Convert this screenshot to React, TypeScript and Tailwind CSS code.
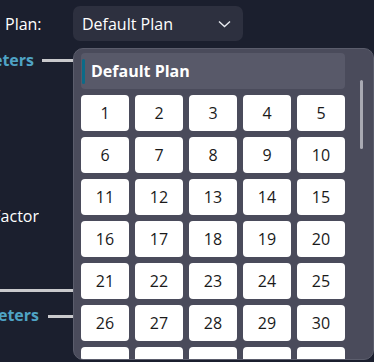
import React from "react";

const nums = Array.from({ length: 35 }, (_, i) => i + 1);

function Clipped({ text, width, className }: { text: string; width: string; className: string }) {
  return (
    <div className={`${width} overflow-hidden flex justify-end shrink-0`}>
      <span className={`whitespace-nowrap ${className}`}>{text}</span>
    </div>
  );
}

export default function App() {
  return (
    <div
      className="relative w-[374px] h-[362px] overflow-hidden bg-[#1b1f2e] text-white"
      style={{ fontFamily: '"Open Sans", "Noto Sans", sans-serif' }}
    >
      {/* page underneath */}
      <div className="flex flex-col">
        <div className="flex items-center h-[35px] mt-[6px] pl-[5px]">
          <span className="text-[16px] w-[68px]">Plan:</span>
          <button className="flex items-center justify-between w-[170px] h-[35px] rounded-[7px] bg-[#2d303f] pl-[9px] pr-[12px] text-[16px] text-white">
            <span>Default Plan</span>
            <svg width="13" height="8" viewBox="0 0 13 8" fill="none">
              <path d="M1 1.5 L6.5 6.5 L12 1.5" stroke="#e8eaf0" strokeWidth="1.4" />
            </svg>
          </button>
        </div>

        <div className="flex items-center gap-[8px] mt-[7px] h-[24px]">
          <Clipped text="Parameters" width="w-[34px]" className="font-bold text-[16px] text-[#4fa3c5]" />
          <div className="flex-1 h-[3px] bg-[#c9c9cc]" />
        </div>

        <div className="mt-[132px] h-[24px] flex items-center">
          <Clipped text="Scale Factor" width="w-[39px]" className="text-[16px] text-white" />
        </div>

        <div className="mt-[61px] h-[3px] bg-[#c9c9cc]" />

        <div className="flex items-center gap-[9px] mt-[11px] h-[24px]">
          <Clipped text="Parameters" width="w-[39px]" className="font-bold text-[16px] text-[#4fa3c5]" />
          <div className="flex-1 h-[3px] mt-[3px] bg-[#c9c9cc]" />
        </div>
      </div>

      {/* dropdown menu */}
      <div className="absolute left-[73px] top-[48px] w-[301px] h-[312px] rounded-[10px] border border-[#5b5d6c] bg-[#4a4b5b] overflow-hidden">
        <div className="flex flex-col gap-[6px] pl-[7px] pt-[4px]">
          <div className="flex items-center w-[264px] h-[36px] rounded-[4px] bg-[#585969] pl-[1px]">
            <div className="w-[3px] h-[25px] rounded-full bg-[#0b6b88]" />
            <span className="ml-[6px] font-bold text-[16px] text-white">Default Plan</span>
          </div>
          <div className="grid grid-cols-[repeat(5,48px)] gap-[6px]">
            {nums.map((n) => (
              <div
                key={n}
                className="h-[36px] rounded-[4px] bg-white text-[#1a1a1a] text-[16px] flex items-center justify-center"
              >
                {n}
              </div>
            ))}
          </div>
        </div>
        <div className="absolute left-[286px] top-[31px] w-[3px] h-[69px] rounded-full bg-[#a9aab3]" />
      </div>
    </div>
  );
}
